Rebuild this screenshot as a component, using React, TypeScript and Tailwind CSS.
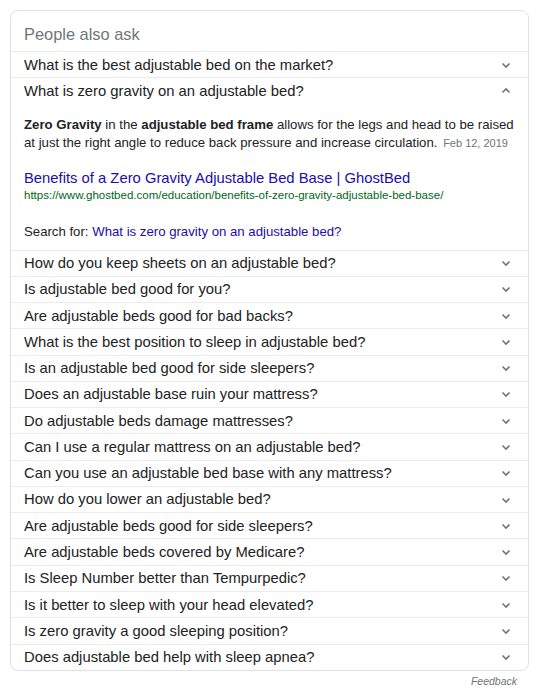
import React from 'react'

const questions: string[] = [
    'How do you keep sheets on an adjustable bed?',
    'Is adjustable bed good for you?',
    'Are adjustable beds good for bad backs?',
    'What is the best position to sleep in adjustable bed?',
    'Is an adjustable bed good for side sleepers?',
    'Does an adjustable base ruin your mattress?',
    'Do adjustable beds damage mattresses?',
    'Can I use a regular mattress on an adjustable bed?',
    'Can you use an adjustable bed base with any mattress?',
    'How do you lower an adjustable bed?',
    'Are adjustable beds good for side sleepers?',
    'Are adjustable beds covered by Medicare?',
    'Is Sleep Number better than Tempurpedic?',
    'Is it better to sleep with your head elevated?',
    'Is zero gravity a good sleeping position?',
    'Does adjustable bed help with sleep apnea?',
]

const Chevron = ({ up }: { up?: boolean }) => (
    <svg width="10" height="10" viewBox="0 0 10 10" className="shrink-0">
        <path
            d={up ? 'M1.5 6.5 L5 3 L8.5 6.5' : 'M1.5 3.5 L5 7 L8.5 3.5'}
            fill="none"
            stroke="#70757a"
            strokeWidth="1.6"
        />
    </svg>
)

const Row = ({ text, up }: { text: string; up?: boolean }) => (
    <div className="flex h-[26.27px] items-center justify-between border-t border-[#ebebeb] pl-[13px] pr-[17px]">
        <span className="text-[14.8px] text-[#222]">{text}</span>
        <Chevron up={up} />
    </div>
)

export default function App() {
    return (
        <div
            className="w-[540px] h-[695px] bg-white pt-[10px]"
            style={{ fontFamily: '"Liberation Sans", Arial, sans-serif' }}
        >
            <div className="ml-[10px] w-[519px] rounded-lg border border-[#dfe1e5] overflow-hidden">
                <div className="h-[40px] pl-[13px] pt-[12px] text-[16.4px] leading-[22px] text-[#70757a]">
                    People also ask
                </div>
                <Row text="What is the best adjustable bed on the market?" />
                <Row text="What is zero gravity on an adjustable bed?" up />
                <div className="pl-[13px] pr-[10px] pt-[12px] pb-[9px] text-[13.2px] text-[#222]">
                    <p className="leading-[18px]">
                        <b>Zero Gravity</b> in the <b>adjustable bed frame</b> allows for the legs
                        and head to be raised at just the right angle to reduce back pressure and
                        increase circulation.{' '}
                        <span className="ml-[2px] text-[11px] text-[#70757a]">Feb 12, 2019</span>
                    </p>
                    <div className="mt-[17px] text-[14.8px] leading-[18px] text-[#1a0dab]">
                        Benefits of a Zero Gravity Adjustable Bed Base | GhostBed
                    </div>
                    <div className="mt-[1px] text-[11.5px] leading-[14px] text-[#006621]">
                        https://www.ghostbed.com/education/benefits-of-zero-gravity-adjustable-bed-base/
                    </div>
                    <div className="mt-[21px] leading-[18px]">
                        Search for:{' '}
                        <span className="text-[#1a0dab]">What is zero gravity on an adjustable bed?</span>
                    </div>
                </div>
                {questions.map((q) => (
                    <Row key={q} text={q} />
                ))}
            </div>
            <div className="w-[517px] pt-[3px] text-right text-[10.5px] italic text-[#70757a]">
                Feedback
            </div>
        </div>
    )
}
